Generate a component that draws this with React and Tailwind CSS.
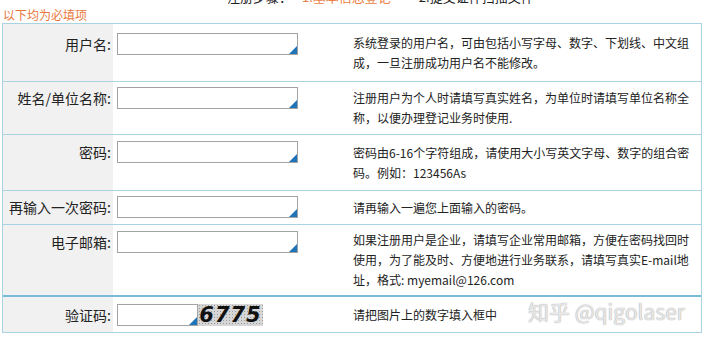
import React from 'react';

const FONT = { fontFamily: '"Microsoft YaHei", "Noto Sans CJK SC", "Noto Sans", sans-serif' };

// each row: label, content height (px), top padding of the input, description lines
const rows = [
  { label: '用户名:', h: 'h-[58px]', pt: 'pt-[9px]', lines: ['系统登录的用户名，可由包括小写字母、数字、下划线、中文组', '成，一旦注册成功用户名不能修改。'] },
  { label: '姓名/单位名称:', h: 'h-[53px]', pt: 'pt-[5px]', lines: ['注册用户为个人时请填写真实姓名，为单位时请填写单位名称全', '称，以便办理登记业务时使用.'] },
  { label: '密码:', h: 'h-[56px]', pt: 'pt-[6px]', lines: ['密码由6-16个字符组成，请使用大小写英文字母、数字的组合密', '码。例如：123456As'] },
  { label: '再输入一次密码:', h: 'h-[34px]', pt: 'pt-[5px]', lines: ['请再输入一遍您上面输入的密码。'] },
  { label: '电子邮箱:', h: 'h-[72px]', pt: 'pt-[6px]', lines: ['如果注册用户是企业，请填写企业常用邮箱，方便在密码找回时', '使用，为了能及时、方便地进行业务联系，请填写真实E-mail地', '址，格式: myemail@126.com'], thick: true },
];

const Field = ({ w = 'w-[181px]' }) => (
  <div className={`relative h-[22px] ${w} border border-[#a3a3a3] bg-white`}>
    <div className="absolute bottom-0 right-0 h-0 w-0 border-b-[8px] border-l-[8px] border-b-[#1f73b7] border-l-transparent" />
  </div>
);

const Row = ({ label, h, pt, lines, thick, children }) => (
  <div className={`flex ${h} ${thick ? 'border-b-2 border-[#79bcd9]' : 'border-b border-[#a8d3e3]'}`}>
    <div className={`w-[110px] shrink-0 bg-[#f1f1f1] ${pt} pr-[2px] text-right text-[14px] leading-[22px] text-[#222]`}>
      {label}
    </div>
    <div className={`w-[227px] shrink-0 ${pt} pl-[4px]`}>{children}</div>
    <div className="flex flex-1 flex-col justify-center pl-[13px] text-[12px] leading-[20px] text-[#222]">
      {lines.map((l) => (
        <div key={l} className="whitespace-nowrap">{l}</div>
      ))}
    </div>
  </div>
);

export default function App() {
  return (
    <div className="relative h-[341px] w-[705px] overflow-hidden bg-white" style={FONT}>
      {/* step line, mostly scrolled off the top */}
      <div className="h-[7px] overflow-hidden">
        <div className="-mt-[11px] pl-[227px] text-[13px] leading-[16px] text-[#222] whitespace-nowrap">
          注册步骤：<span className="ml-[10px] text-[#ec7f45]">1.基本信息登记</span>
          <span className="ml-[28px]">2.提交证件扫描文件</span>
        </div>
      </div>
      <div className="h-[16px] pl-[3px] text-[12px] leading-[16px] text-[#e8793e]">以下均为必填项</div>

      <div className="mx-[2px] w-[700px] border-x border-t border-[#a8d3e3]">
        {rows.map((r) => (
          <Row key={r.label} {...r}>
            <Field />
          </Row>
        ))}
        <Row label="验证码:" h="h-[36px]" pt="pt-[7px]" lines={['请把图片上的数字填入框中']}>
          <div className="flex items-center">
            <Field w="w-[81px]" />
            <div className="flex h-[22px] w-[65px] items-center justify-center bg-[#d6d6d6] bg-[radial-gradient(#9a9a9a_0.6px,transparent_0.8px)] bg-[length:3px_3px]">
              <span className="text-[21px] font-bold italic leading-none tracking-[1px] text-[#111]" style={{ fontFamily: '"DejaVu Sans", sans-serif' }}>
                6775
              </span>
            </div>
          </div>
        </Row>
      </div>

      {/* watermark */}
      <div
        className="pointer-events-none absolute left-[528px] top-[298px] whitespace-nowrap text-[21px] leading-[26px] text-white/70"
        style={{ textShadow: '0 0 1px #b0b0b0, 0 0 1px #b0b0b0' }}
      >
        知乎 @qigolaser
      </div>
    </div>
  );
}
